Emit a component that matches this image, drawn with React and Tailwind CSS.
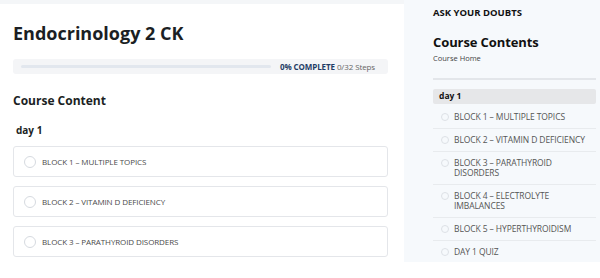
const lessons = [
  "BLOCK 1 – MULTIPLE TOPICS",
  "BLOCK 2 – VITAMIN D DEFICIENCY",
  "BLOCK 3 – PARATHYROID DISORDERS",
];

const sideItems = [
  "BLOCK 1 – MULTIPLE TOPICS",
  "BLOCK 2 – VITAMIN D DEFICIENCY",
  "BLOCK 3 – PARATHYROID DISORDERS",
  "BLOCK 4 – ELECTROLYTE IMBALANCES",
  "BLOCK 5 – HYPERTHYROIDISM",
  "DAY 1 QUIZ",
];

export default function App() {
  return (
    <div className="w-[600px] h-[278px] overflow-hidden bg-white flex font-['Open_Sans',sans-serif] text-[#1f2328]">
      {/* main column */}
      <div className="w-[404px] flex flex-col">
        <div className="h-[4px] bg-[#f4f6f8]" />
        <div className="pl-[13px] pr-[16px]">
          <h1 className="mt-[18px] text-[18px] leading-[22px] font-bold text-[#1b1f24]">
            Endocrinology 2 CK
          </h1>

          {/* progress */}
          <div className="mt-[15px] h-[15px] bg-[#f4f5f7] rounded-[3px] flex items-center pl-[8px] pr-[10px]">
            <div className="w-[250px] h-[3px] bg-[#e2e7ee] rounded-full" />
            <div className="ml-[9px] text-[8px] leading-none whitespace-nowrap tracking-[-0.1px]">
              <span className="font-bold text-[#1f3d66]">0% COMPLETE</span>{" "}
              <span className="text-[#666]">0/32 Steps</span>
            </div>
          </div>

          <h2 className="mt-[19px] text-[12px] leading-[16px] font-bold text-[#1b1f24]">
            Course Content
          </h2>
          <div className="mt-[14px] pl-[3px] text-[10px] leading-[14px] font-bold text-[#1b1f24]">
            day 1
          </div>

          <div className="mt-[9px] flex flex-col gap-[9px]">
            {lessons.map((t) => (
              <div
                key={t}
                className="h-[31px] border border-[#e4e6ea] rounded-[3px] flex items-center pl-[10px]"
              >
                <span className="w-[12px] h-[12px] rounded-full border-[1.5px] border-[#d6dae0] bg-white" />
                <span className="ml-[6px] text-[8px] text-[#4a4a4a] tracking-[-0.1px]">{t}</span>
              </div>
            ))}
          </div>
        </div>
      </div>

      {/* sidebar */}
      <div className="w-[196px] self-start h-[262px] bg-[#f6f9fc] pl-[29px] pr-[4px]">
        <div className="mt-[7px] text-[9.5px] leading-[12px] font-bold text-[#111]">ASK YOUR DOUBTS</div>
        <div className="mt-[14px] text-[13px] leading-[18px] font-bold text-[#111] tracking-[-0.1px]">Course Contents</div>
        <div className="mt-[2px] text-[7.5px] leading-[11px] text-[#444]">Course Home</div>
        <div className="mt-[14px] h-[2px] bg-[#e3e6ea]" />
        <div className="mt-[9px] h-[15px] bg-[#e6e7e9] rounded-[2px] flex items-center pl-[6px] text-[8.5px] font-bold text-[#111]">
          day 1
        </div>
        <div className="mt-[2px] flex flex-col">
          {sideItems.map((t, i) => (
            <div
              key={t}
              className={`flex items-start pl-[8px] pr-[4px] py-[6px] ${i < sideItems.length - 1 ? "border-b border-[#e8ebee]" : ""}`}
            >
              <span className="mt-[1px] shrink-0 w-[8px] h-[8px] rounded-full border border-[#dde1e6] bg-[#f6f9fc]" />
              <span className="ml-[5px] text-[8.5px] leading-[10px] text-[#555] tracking-[-0.1px]">{t}</span>
            </div>
          ))}
        </div>
      </div>
    </div>
  );
}
